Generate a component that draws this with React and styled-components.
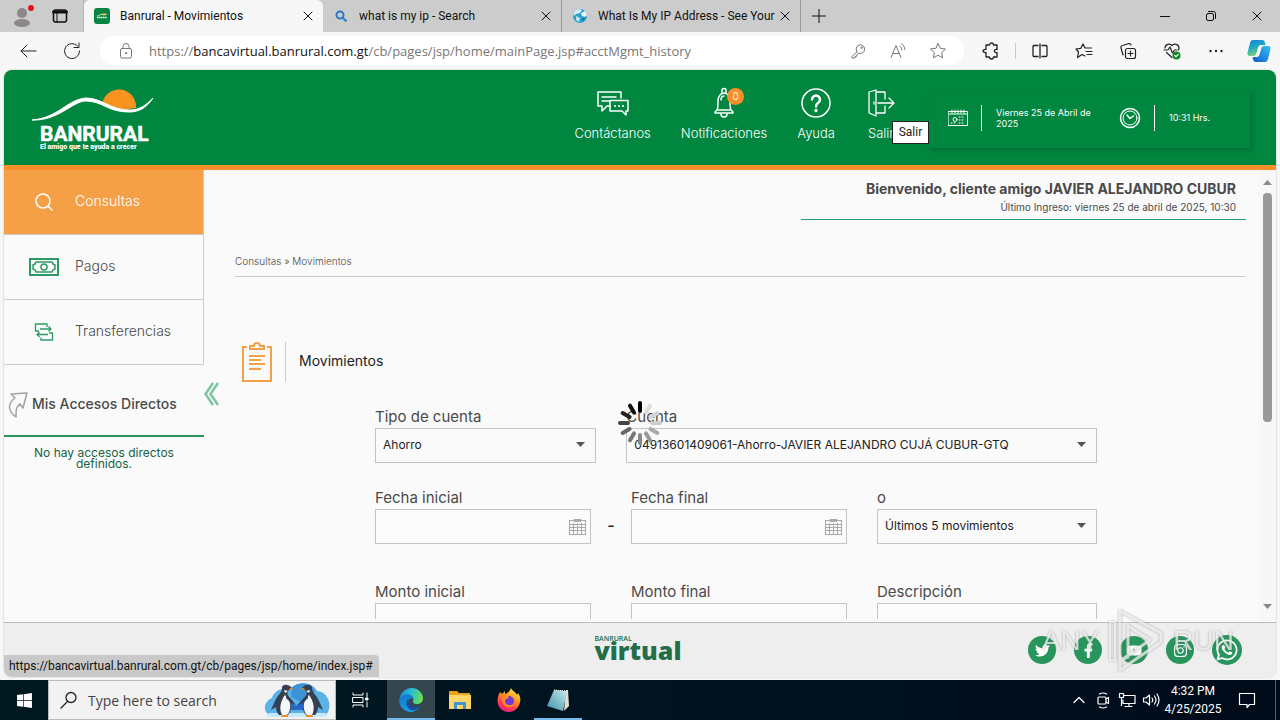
import React from 'react';
import styled, { createGlobalStyle } from 'styled-components';
import {
  FaTwitter,
  FaFacebookF,
  FaYoutube,
  FaInstagram,
  FaWhatsapp,
  FaWindows,
} from 'react-icons/fa';

const UI_FONT = '"Open Sans", "Noto Sans", sans-serif';
const UI_FONT_SMALL = 'Roboto, "Open Sans", sans-serif';
const SITE_FONT = 'Inter, "Open Sans", sans-serif';

const TABS = [
  { title: 'Banrural - Movimientos', icon: 'bank', active: true },
  { title: 'what is my ip - Search', icon: 'search' },
  { title: 'What Is My IP Address - See Your', icon: 'globe' },
];

const FAVICONS = {
  bank: (
    <svg width="16" height="16" viewBox="0 0 16 16">
      <rect width="16" height="16" rx="3" fill="#0a8541" />
      <path d="M8 7a2 2 0 0 1 4 0" fill="#f7931e" />
      <path d="M3 8c3-.3 3-2 5-1.500s3 .5 5-.5" stroke="#fff" strokeWidth=".7" fill="none" />
      <path d="M3 9.500h10" stroke="#e6f3ea" strokeWidth="1.500" strokeDasharray="1.500 .4" />
    </svg>
  ),
  search: (
    <svg width="16" height="16" viewBox="0 0 16 16" fill="none" stroke="#2c79c7" strokeWidth="2">
      <circle cx="7" cy="7" r="3.500" />
      <path d="M9.500 9.500l4 4" />
    </svg>
  ),
  globe: (
    <svg width="16" height="16" viewBox="0 0 16 16">
      <circle cx="8" cy="8" r="7" fill="#2b9fd0" />
      <path d="M3 3l4-2 3 1-2 3-4 1-2 2-.5-2z" fill="#d4f0f8" />
      <path d="M9 5l4-2 2 4-2 2-3-1z" fill="#eef9fc" />
      <path d="M4 8l4 2-1 4-3-2z" fill="#bfe6f2" />
      <path d="M10 11l3-2-2 4z" fill="#155f99" />
    </svg>
  ),
};

const Line = ({ size = 20, box = 20, width = 1, children, ...rest }) => (
  <svg
    width={size}
    height={size}
    viewBox={`0 0 ${box} ${box}`}
    fill="none"
    stroke="currentColor"
    strokeWidth={width}
    strokeLinecap="round"
    strokeLinejoin="round"
    {...rest}
  >
    {children}
  </svg>
);

const CloseIcon = () => (
  <Line size={10} box={10}>
    <path d="M1 1l8 8M9 1l-8 8" />
  </Line>
);

const PlusIcon = () => (
  <Line size={14} box={14}>
    <path d="M7 0v14M0 7h14" />
  </Line>
);

const BrowserTabs = () => (
  <TabStrip>
    <ProfileArea>
      <ChromeButton aria-label="Profile">
        <svg width="24" height="24" viewBox="0 0 24 24">
          <circle cx="12" cy="9" r="5" fill="#8b8887" />
          <ellipse cx="12" cy="19" rx="8" ry="4" fill="#8b8887" />
          <circle cx="21" cy="4" r="3" fill="#e3131b" />
        </svg>
      </ChromeButton>
      <ChromeButton aria-label="Tab actions">
        <Line size={16} box={16}>
          <rect x="1.500" y="2" width="13" height="12" rx="2" strokeWidth="1.500" />
          <path d="M1.500 4h13" strokeWidth="3" />
          <path d="M5 4v10" />
        </Line>
      </ChromeButton>
    </ProfileArea>
    {TABS.map((tab) => (
      <Tab key={tab.title} $active={tab.active}>
        {FAVICONS[tab.icon]}
        <TabTitle>{tab.title}</TabTitle>
        <TabClose aria-label="Close tab">
          <CloseIcon />
        </TabClose>
      </Tab>
    ))}
    <NewTab aria-label="New tab">
      <PlusIcon />
    </NewTab>
    <WindowButtons>
      <WindowButton aria-label="Minimize">
        <Line size={10} box={10}>
          <path d="M0 5.500h10" />
        </Line>
      </WindowButton>
      <WindowButton aria-label="Restore">
        <Line size={12} box={12}>
          <rect x="1.500" y="3.500" width="7" height="7" rx="1.500" />
          <path d="M3.500 1.500h5a2 2 0 0 1 2 2v5" />
        </Line>
      </WindowButton>
      <WindowButton aria-label="Close">
        <CloseIcon />
      </WindowButton>
    </WindowButtons>
  </TabStrip>
);

const AddressBar = () => (
  <Toolbar>
    <ToolButton aria-label="Back">
      <Line>
        <path d="M18 10H3M9 4l-6 6 6 6" />
      </Line>
    </ToolButton>
    <ToolButton aria-label="Refresh">
      <Line>
        <path d="M17.500 10a7.500 7.500 0 1 1-2-5M17 2v4.500h-5" />
      </Line>
    </ToolButton>
    <AddressPill>
      <Line size={18} box={18}>
        <rect x="3.500" y="6.500" width="11" height="9.500" rx="1.500" />
        <path d="M6 6V4.500a3 3 0 0 1 6 0V6" />
        <circle cx="9" cy="11" r=".6" fill="currentColor" />
      </Line>
      <Url>
        https://<b>bancavirtual.banrural.com.gt</b>
        /cb/pages/jsp/home/mainPage.jsp#acctMgmt_history
      </Url>
      <PillButton aria-label="Passwords">
        <Line size={18} box={18}>
          <path d="M8 9.800L3 14.500V16h3v-1.500h1.500V13L10 11.200a4.300 4.300 0 1 0-2-1.400z" />
          <circle cx="12.800" cy="5.700" r=".8" />
        </Line>
      </PillButton>
      <PillButton aria-label="Read aloud">
        <Line size={18} box={18}>
          <path d="M2 15.500L7 3.500l5 12M4 11.500h6M11 4a5 5 0 0 1 2 4M12.500 1.500a9 9 0 0 1 3.500 6" />
        </Line>
      </PillButton>
      <PillButton aria-label="Add to favorites">
        <Line size={18} box={18}>
          <path d="M9 1.500l2.300 4.800 5.200.7-3.800 3.600.9 5.200L9 13.300l-4.600 2.500.9-5.200L1.500 7l5.200-.7z" />
        </Line>
      </PillButton>
    </AddressPill>
    <ToolButton aria-label="Extensions">
      <Line size={18} box={18} width={1.300}>
        <path d="M7.500 3a2 2 0 0 1 4 0H15v4.500c-3.500-1-3.500 4 0 3V15h-3.500a2 2 0 0 1-4 0H4v-4.500c-4 .5-4-3.500 0-3V3z" />
      </Line>
    </ToolButton>
    <ToolDivider />
    <ToolButton aria-label="Split screen">
      <Line size={18} box={18} width={1.300}>
        <path d="M7 3.500H3a1 1 0 0 0-1 1v9a1 1 0 0 0 1 1h4M11 3.500h4a1 1 0 0 1 1 1v9a1 1 0 0 1-1 1h-4M9 2v14" />
      </Line>
    </ToolButton>
    <ToolButton aria-label="Favorites">
      <Line size={18} box={18} width={1.200}>
        <path d="M10 14l-3-1.500-4.500 3 1-5.500L1 7l4.800-.7L8 2l2 4h6.500M11 9.500h6M12 12.500h5" />
      </Line>
    </ToolButton>
    <ToolButton aria-label="Collections">
      <Line size={18} box={18} width={1.200}>
        <rect x="6.500" y="6.500" width="10" height="10" rx="2" />
        <path d="M11.500 9v5M9 11.500h5M4 13l-2-7a2 2 0 0 1 1.500-2.500L10 1.500a2 2 0 0 1 2 1.500" />
      </Line>
    </ToolButton>
    <ToolButton aria-label="Browser essentials">
      <Line size={18} box={18} width={1.200}>
        <path d="M2 6a4 4 0 0 1 7-2.500A4 4 0 0 1 16 6c0 .7-.2 1.300-.5 2M3.500 10.500L9 15.500M1 8h4l2-3 2.500 6 2-3H14" />
        <circle cx="13.500" cy="13.500" r="4" fill="#0b8a1d" stroke="none" />
        <path d="M11.800 13.500l1.200 1.300 2.200-2.500" stroke="#fff" />
      </Line>
    </ToolButton>
    <ToolButton aria-label="Settings and more">
      <Line size={18} box={18}>
        <circle cx="3.500" cy="9" r="1.200" fill="currentColor" stroke="none" />
        <circle cx="9" cy="9" r="1.200" fill="currentColor" stroke="none" />
        <circle cx="14.500" cy="9" r="1.200" fill="currentColor" stroke="none" />
      </Line>
    </ToolButton>
    <ToolButton aria-label="Copilot">
      <svg width="24" height="24" viewBox="0 0 24 24">
        <defs>
          <linearGradient id="cpl" x1="0" y1="0" x2=".3" y2="1">
            <stop offset="0" stopColor="#1c7fe0" />
            <stop offset=".5" stopColor="#18a9c4" />
            <stop offset="1" stopColor="#7fcf72" />
          </linearGradient>
          <linearGradient id="cpr" x1="1" y1="0" x2="0" y2="1">
            <stop offset="0" stopColor="#35c3f2" />
            <stop offset="1" stopColor="#1059cf" />
          </linearGradient>
        </defs>
        <path d="M6 1h9c2 0 2.500 1 3 3l.5 2h-4c-2 0-3 1-3.500 3l-1.500 5c-.5 2-1.500 3-3.500 3H3c-2.500 0-3-2-2.300-4L3 4c.5-2 1.300-3 3-3z" fill="url(#cpl)" />
        <path d="M18 23H9c-2 0-2.500-1-3-3l-.5-2h3.500c2 0 3-1 3.500-3L14 10c.5-2 1.500-3 3.500-3H21c2.500 0 3 2 2.300 4L21 20c-.5 2-1.300 3-3 3z" fill="url(#cpr)" />
        <path d="M11 9c.5-1.800 1.500-2.800 3.500-3h2c-1.500 1-2 2-2.500 4l-1.500 5c-.5 2-1.500 3-3 3H7c1.500-.5 2-1.500 2.500-3z" fill="#f7f7f7" />
      </svg>
    </ToolButton>
  </Toolbar>
);

const BankLogo = () => (
  <svg width="124" height="64" viewBox="0 0 124 64" role="img" aria-label="Banrural">
    <path d="M70 18a17 17 0 0 1 34 3q-17 3-34-3z" fill="#f7931e" />
    <path
      d="M0 33C26 31 36 12 54 11c16 0 24 12 44 12 10 0 16-5 23-12-6 9-13 14-24 14-22 0-26-11-44-11C40 15 26 34 0 33z"
      fill="#fff"
      stroke="#fff"
    />
    <LogoName x="8" y="54">
      BANRURAL
    </LogoName>
    <LogoSlogan x="8" y="62">
      El amigo que te ayuda a crecer
    </LogoSlogan>
  </svg>
);

const Header = () => (
  <HeaderBar>
    <BankLogo />
    <HeaderNav>
      <HeaderLink href="#contactanos">
        <Line size={32} box={32} width={1.500}>
          <path d="M24 11V5H1v14h4v5l5-5h3" />
          <path d="M5 10h14M5 14h8" />
          <path d="M13 13.500h18V24h-2v4l-4-4H13z" />
          <path d="M18 19h.1M22 19h.1M26 19h.1" strokeWidth="2" />
        </Line>
        Contáctanos
      </HeaderLink>
      <HeaderLink href="#notificaciones">
        <IconHolder>
          <Line size={32} box={32} width={1.500}>
            <path d="M14 6V3.500a2 2 0 0 1 4 0V6M9 23c1-2 1-5 1-9 0-5 3-8 6-8s6 3 6 8c0 4 0 7 1 9M7 25l2-2h14l2 2v1H7z" />
            <path d="M13 27a3 3 0 0 0 6 0M13 13c0-2 1-4 3-4" />
          </Line>
          <Badge>0</Badge>
        </IconHolder>
        Notificaciones
      </HeaderLink>
      <HeaderLink href="#ayuda">
        <Line size={32} box={32} width={1.500}>
          <circle cx="16" cy="16" r="14" />
          <path d="M12 12.500a4 4 0 1 1 6 3.500c-1.500 1-2 1.500-2 3.500" strokeWidth="2.500" />
          <circle cx="16" cy="23.500" r=".9" fill="currentColor" />
        </Line>
        Ayuda
      </HeaderLink>
      <HeaderLink href="#salir">
        <Line size={32} box={32} width={1.300}>
          <path d="M11 5h9v7M11 26h9v-7M4 5l7-2v26l-7-3zM13 16h15M24 11l5 5-5 5M9 15v2" />
        </Line>
        Salir
        <Tooltip role="tooltip">Salir</Tooltip>
      </HeaderLink>
    </HeaderNav>
    <DatePanel>
      <Line size={20} box={20}>
        <rect x=".5" y="3.500" width="19" height="14" />
        <path d="M1 6h18M4 2v3M7 2v3M10 2v3M13 2v3M16 2v3" />
        <circle cx="7" cy="11.500" r="2" />
        <path d="M11 9h6M11 12h6M11 15h6M3 15h6" strokeDasharray="1 2" />
      </Line>
      <DateText $wide>Viernes 25 de Abril de 2025</DateText>
      <Line size={22} box={22}>
        <circle cx="11" cy="11" r="9.500" strokeWidth="1.500" />
        <circle cx="11" cy="11" r="7" />
        <path d="M8 8l3 3.500L14.500 9" strokeWidth="1.500" />
      </Line>
      <DateText>10:31 Hrs.</DateText>
    </DatePanel>
  </HeaderBar>
);

const Sidebar = () => (
  <SidebarColumn>
    <MenuItem href="#consultas" $active>
      <MenuIcon>
        <Line size={20} box={20} width={1.500}>
          <circle cx="9" cy="9" r="7" />
          <path d="M14 14l4 4" />
        </Line>
      </MenuIcon>
      <MenuText>Consultas</MenuText>
    </MenuItem>
    <MenuItem href="#pagos">
      <MenuIcon>
        <svg width="30" height="18" viewBox="0 0 30 18" fill="none" stroke="#2c9a64">
          <rect x="1" y="1" width="28" height="16" strokeWidth="2" />
          <path d="M7 4h16q1 3 3 3v4q-2 0-3 3H7q-1-3-3-3V7q2 0 3-3z" strokeWidth="1.500" />
          <circle cx="15" cy="9" r="3" strokeWidth="1.500" />
        </svg>
      </MenuIcon>
      <MenuText>Pagos</MenuText>
    </MenuItem>
    <MenuItem href="#transferencias">
      <MenuIcon>
        <svg width="20" height="20" viewBox="0 0 20 20" fill="none" stroke="#2c9a64" strokeWidth="1.300">
          <path d="M13 5V2H1.500v7H5M6 7h11M14.500 4.500L17 7l-2.500 2.500M14 12.500H3M5.500 10L3 12.500 5.500 15M7 15.500V18h11.500v-7H15" />
        </svg>
      </MenuIcon>
      <MenuText>Transferencias</MenuText>
    </MenuItem>
    <ShortcutsTitle>
      <svg width="22" height="30" viewBox="0 0 22 30" fill="none" stroke="#a3a3a3" strokeWidth="1.500">
        <path d="M4 6l16-1-4 15-3-4c-4 2-4 6-4 13C1 23 0 16 8 10z" strokeLinejoin="round" />
      </svg>
      Mis Accesos Directos
    </ShortcutsTitle>
    <ShortcutsEmpty>No hay accesos directos definidos.</ShortcutsEmpty>
    <CollapseButton aria-label="Ocultar menú">
      <svg width="15" height="24" viewBox="0 0 15 24" fill="none" stroke="#7cc4a0" strokeWidth="2.500">
        <path d="M9 1L1.500 12 9 23M14 1L6.500 12l7.500 11" />
      </svg>
    </CollapseButton>
  </SidebarColumn>
);

const SelectField = ({ id, label, option, column }) => (
  <Field $column={column}>
    <Label htmlFor={id}>{label}</Label>
    <SelectBox>
      <Select id={id}>
        <option>{option}</option>
      </Select>
      <svg width="9" height="5" viewBox="0 0 9 5">
        <path d="M0 0h9L4.500 5z" fill="#555" />
      </svg>
    </SelectBox>
  </Field>
);

const TextField = ({ id, label, column, calendar }) => (
  <Field $column={column}>
    <Label htmlFor={id}>{label}</Label>
    <InputBox>
      <Input id={id} type="text" />
      {calendar && (
        <CalendarButton type="button" aria-label={`Elegir ${label}`}>
          <svg width="17" height="17" viewBox="0 0 17 17" fill="none" stroke="#a9a9a9">
            <rect x=".5" y="2.500" width="16" height="14" />
            <path d="M.5 6.500h16M.5 9.500h16M.5 12.500h16M4.500 5v11M8.500 5v11M12.500 5v11M5 1.500h7v2H5z" />
          </svg>
        </CalendarButton>
      )}
    </InputBox>
  </Field>
);

const Movements = () => (
  <Content>
    <Welcome>
      <WelcomeName>Bienvenido, cliente amigo JAVIER ALEJANDRO CUBUR</WelcomeName>
      <LastLogin>Último Ingreso: viernes 25 de abril de 2025, 10:30</LastLogin>
    </Welcome>
    <Breadcrumb>Consultas » Movimientos</Breadcrumb>
    <SectionTitle>
      <svg width="30" height="40" viewBox="0 0 30 40" fill="none" stroke="#f2a04a" strokeWidth="2">
        <path d="M5 5H1v34h28V5h-4M8 7V4h4c0-4 6-4 6 0h4v3z" />
        <path d="M7 14h16M7 18h12M7 22h16M7 27h12" />
      </svg>
      <h1>Movimientos</h1>
    </SectionTitle>
    <Form>
      <AccountRow>
        <SelectField id="tipo" label="Tipo de cuenta" option="Ahorro" />
        <SelectField
          id="cuenta"
          label="Cuenta"
          option="04913601409061-Ahorro-JAVIER ALEJANDRO CUJÁ CUBUR-GTQ"
        />
      </AccountRow>
      <FilterRow>
        <TextField id="fecha-inicial" label="Fecha inicial" column="1" calendar />
        <Dash>-</Dash>
        <TextField id="fecha-final" label="Fecha final" column="3" calendar />
        <SelectField id="rango" label="o" option="Últimos 5 movimientos" column="5" />
      </FilterRow>
      <FilterRow>
        <TextField id="monto-inicial" label="Monto inicial" column="1" />
        <TextField id="monto-final" label="Monto final" column="3" />
        <TextField id="descripcion" label="Descripción" column="5" />
      </FilterRow>
    </Form>
  </Content>
);

const SPOKES = [
  '#000', '#ddd', '#d6d6d6', '#ccc', '#aaa', '#999',
  '#888', '#777', '#666', '#444', '#222', '#111',
];

const Spinner = () => (
  <SpinnerOverlay>
    <svg width="46" height="46" viewBox="-23 -23 46 46">
      {SPOKES.map((color, i) => (
        <path
          key={i}
          d="M0-12V-20"
          stroke={color}
          strokeWidth="4"
          strokeLinecap="round"
          transform={`rotate(${i * 30})`}
        />
      ))}
    </svg>
  </SpinnerOverlay>
);

const SOCIAL = [
  { name: 'Twitter', Icon: FaTwitter },
  { name: 'Facebook', Icon: FaFacebookF },
  { name: 'YouTube', Icon: FaYoutube },
  { name: 'Instagram', Icon: FaInstagram },
  { name: 'WhatsApp', Icon: FaWhatsapp, large: true },
];

const Footer = () => (
  <FooterBar>
    <VirtualLogo>
      <small>BANRURAL</small>
      <strong>virtual</strong>
    </VirtualLogo>
    <SocialList>
      {SOCIAL.map(({ name, Icon, large }) => (
        <SocialLink key={name} href={`#${name}`} aria-label={name} $large={large}>
          <Icon />
        </SocialLink>
      ))}
    </SocialList>
    <StatusBubble>https://bancavirtual.banrural.com.gt/cb/pages/jsp/home/index.jsp#</StatusBubble>
  </FooterBar>
);

const Penguins = () => (
  <svg width="66" height="37" viewBox="0 0 66 37">
    <path d="M8 34C-2 31-1 20 8 16c2-8 12-11 19-8 4-9 21-9 26 1 13 1 16 18 8 25z" fill="#5bb2e6" />
    <path d="M28 5c8-6 19-4 23 4l-12 12-12-6z" fill="#3c94d6" />
    <path d="M6 35h54c5 0 4-4 0-4H6c-4 0-4 4 0 4z" fill="#c5e9fa" />
    <path d="M25 17l7 7 8-8v12H25z" fill="#2468c8" />
    <path d="M28 6c-4-5-11-4-10 1 0 3-5 7-7 12L7 28l5-3c0 3 1 6 3 8h9c3-3 4-8 2-13-1-3-4-6-2-11z" fill="#34404f" />
    <path d="M18 33c-3-6-2-13 3-20 4 3 6 9 5 14-1 4-2 6-4 6z" fill="#f4f7fa" />
    <path d="M22 11l10 12-5-2-5-5z" fill="#34404f" />
    <path d="M38 6c4-5 11-4 10 1 0 3 5 7 7 12l4 9-5-3c0 3-1 6-3 8h-9c-3-3-4-8-2-13 1-3 4-6 2-11z" fill="#34404f" />
    <path d="M48 33c3-6 2-13-3-20-4 3-6 9-5 14 1 4 2 6 4 6z" fill="#f4f7fa" />
    <path d="M44 11L34 23l5-2 5-5z" fill="#34404f" />
    <path d="M26 6l4 1-5 1zM40 6l-4 1 5 1zM18 33h6v2h-7zM42 33h6l1 2h-7z" fill="#f08a24" />
    <path d="M20 8l4 1-3 2zM46 8l-4 1 3 2z" fill="#fff" />
  </svg>
);

const EdgeIcon = () => (
  <svg width="24" height="24" viewBox="0 0 24 24">
    <defs>
      <linearGradient id="edge-top" x1="0" x2="1" y1=".3" y2=".5">
        <stop offset="0" stopColor="#1a8ad4" />
        <stop offset=".5" stopColor="#2dbfd0" />
        <stop offset="1" stopColor="#6be04c" />
      </linearGradient>
      <linearGradient id="edge-low" x1="0" x2="0" y1="0" y2="1">
        <stop offset="0" stopColor="#1478cf" />
        <stop offset="1" stopColor="#1a9be4" />
      </linearGradient>
    </defs>
    <path d="M.5 11C1.500 4 7 0 12.500 0 19 0 24 5 24 10c0 4-3 6-6 6-3.500 0-4.500-1.500-4-3 1.500-3-1-6-5-6C5 7 2 8.500.5 11z" fill="url(#edge-top)" />
    <path d="M.3 12C1 8 5 6.500 8.500 6.500c3 0 5.500 2 5.500 4.500C10 9 8.500 13 9.500 16c1.500 4 6.500 5.500 11 3C18 22.500 14.500 24 12 24 5 24-.2 18.500.3 12z" fill="url(#edge-low)" />
    <path d="M9 11c-3 3-2 9 3 11 4 1 7-1 9-4-5 2-10 1-11.500-3-.5-1.500-.5-3-.5-4z" fill="#124f9f" />
  </svg>
);

const ExplorerIcon = () => (
  <svg width="22" height="20" viewBox="0 0 22 20">
    <path d="M0 1h8l2 2h11v5H0z" fill="#e8a317" />
    <path d="M0 5h22v14H0z" fill="#ffd667" />
    <path d="M5 19v-7h12v7h-3v-4H8v4z" fill="#3d95d5" />
  </svg>
);

const FirefoxIcon = () => (
  <svg width="24" height="24" viewBox="0 0 24 24">
    <defs>
      <linearGradient id="fox" x1=".8" x2=".3" y1="0" y2="1">
        <stop offset="0" stopColor="#fff14a" />
        <stop offset=".4" stopColor="#ff9a1f" />
        <stop offset=".75" stopColor="#ff3b4e" />
        <stop offset="1" stopColor="#e7188a" />
      </linearGradient>
    </defs>
    <path d="M14 0c1 3 5 4 6 7l1-2c2 3 3 6 2 9-1 6-6 10-11 10C5 24 .5 19 .5 13c0-4 1-6 2.500-9l2 2 3-3v3c3-1 5-3 6-6z" fill="url(#fox)" />
    <circle cx="12" cy="13" r="5" fill="#7139d8" />
    <path d="M6 8c2-1 5 0 6 1 0 2-4 1-4 4 0 4 6 6 9 2-1 5-8 6-11 1-1-3-1-6 0-8z" fill="#ff8b22" />
  </svg>
);

const NotesIcon = () => (
  <svg width="24" height="24" viewBox="0 0 24 24">
    <defs>
      <linearGradient id="note" x1="0" x2="1" y1="1" y2="0">
        <stop offset="0" stopColor="#3f93a8" />
        <stop offset="1" stopColor="#c4e8ec" />
      </linearGradient>
    </defs>
    <path d="M20 2h2l1 16-5 5z" fill="#e6ddce" />
    <path d="M8 2l13 1-4 20-16-5z" fill="url(#note)" />
    <path d="M8 2l13 1" stroke="#fff" strokeDasharray="1 1" />
  </svg>
);

const Taskbar = () => (
  <TaskbarRow>
    <TaskButton aria-label="Start">
      <FaWindows size={17} />
    </TaskButton>
    <SearchBox>
      <Line size={18} box={18} width={1.300}>
        <circle cx="11" cy="6.500" r="5" />
        <path d="M7.500 10.500L1 17" />
      </Line>
      <SearchInput type="search" aria-label="Search" placeholder="Type here to search" />
      <Penguins />
    </SearchBox>
    <TaskButton aria-label="Task view">
      <Line size={18} box={18}>
        <path d="M2 2v2h10V2M2 16v-2h10v2M2 6.500h10v5H2zM16 2v4M16 11v5" />
        <rect x="15" y="7" width="2" height="2" fill="currentColor" />
      </Line>
    </TaskButton>
    <TaskApps>
      <TaskButton aria-label="Edge" $active $open>
        <EdgeIcon />
      </TaskButton>
      <TaskButton aria-label="File Explorer">
        <ExplorerIcon />
      </TaskButton>
      <TaskButton aria-label="Firefox">
        <FirefoxIcon />
      </TaskButton>
      <TaskButton aria-label="Notepad" $open>
        <NotesIcon />
      </TaskButton>
    </TaskApps>
    <Tray>
      <TrayButton aria-label="Show hidden icons">
        <Line size={18} box={18} width={1.300}>
          <path d="M4 11.500l5-5 5 5" />
        </Line>
      </TrayButton>
      <TrayButton aria-label="Meet now">
        <Line size={18} box={18} width={1.200}>
          <rect x="4" y="6" width="8" height="7" rx="1" />
          <path d="M12 8l2.500-1.500v6L12 11M5.500 3q3.500-2 7 0M5.500 16q3.500 2 7 0" />
        </Line>
      </TrayButton>
      <TrayButton aria-label="Network">
        <Line size={18} box={18} width={1.200}>
          <path d="M6 4.500h11v8H5V9M11 12.500v3M7 15.500h7M1.500 2.500h4v4h-4zM3.500 6.500v8" />
        </Line>
      </TrayButton>
      <TrayButton aria-label="Volume">
        <Line size={18} box={18} width={1.200}>
          <path d="M1.500 7v4h2.500l3.500 3V4L4 7zM10 7q1.500 2 0 4M12.500 5q3 4 0 8M15 3q4 6 0 12" />
        </Line>
      </TrayButton>
      <Clock>
        <span>4:32 PM</span>
        <span>4/25/2025</span>
      </Clock>
      <TaskButton aria-label="Notifications">
        <Line size={18} box={18} width={1.200}>
          <path d="M1.500 2.500h15v11h-5l-2.500 3v-3H1.500z" />
        </Line>
      </TaskButton>
    </Tray>
  </TaskbarRow>
);

const Watermark = () => (
  <WatermarkBox aria-hidden="true">
    ANY
    <svg width="56" height="64" viewBox="0 0 56 64" fill="none" stroke="currentColor" strokeWidth="3" strokeLinejoin="round">
      <path d="M12 2l41 22v9L12 61v-9l30-21L20 17v31l-8 4z" />
      <path d="M2 13h5v38H2z" strokeWidth="2" />
    </svg>
    RUN
  </WatermarkBox>
);

export default () => (
  <Screen>
    <GlobalStyle />
    <BrowserTabs />
    <AddressBar />
    <PageFrame>
      <Header />
      <Body>
        <Sidebar />
        <Movements />
        <ScrollTrack>
          <svg width="9" height="5" viewBox="0 0 9 5">
            <path d="M0 5h9L4.500 0z" fill="#8a8a8a" />
          </svg>
          <ScrollThumb />
          <svg width="9" height="5" viewBox="0 0 9 5">
            <path d="M0 0h9L4.500 5z" fill="#8a8a8a" />
          </svg>
        </ScrollTrack>
      </Body>
      <Footer />
    </PageFrame>
    <Taskbar />
    <Spinner />
    <Watermark />
  </Screen>
);

const GlobalStyle = createGlobalStyle`
  * {
    box-sizing: border-box;
  }
  body {
    margin: 0;
    font-family: ${UI_FONT};
    background: #f7f7f7;
  }
  button {
    padding: 0;
    border: 0;
    background: none;
    color: inherit;
    font: inherit;
  }
  a {
    color: inherit;
    text-decoration: none;
  }
  svg {
    display: block;
    flex-shrink: 0;
  }
`;

const Screen = styled.div`
  position: relative;
  display: flex;
  flex-direction: column;
  height: 100vh;
  overflow: hidden;
`;

const TabStrip = styled.div`
  display: flex;
  height: 32px;
  background: #cccccc;
  color: #111;
  font-family: ${UI_FONT_SMALL};
  font-size: 12px;
`;

const ProfileArea = styled.div`
  display: flex;
  align-items: center;
  gap: 14px;
  width: 84px;
  padding-left: 10px;
  border-right: 1px solid #b4b4b4;
`;

const ChromeButton = styled.button`
  display: flex;
  align-items: center;
  justify-content: center;
  width: 24px;
`;

const Tab = styled.div`
  display: flex;
  align-items: center;
  width: 239px;
  padding: 0 10px;
  background: ${(props) => (props.$active ? '#f7f7f7' : 'transparent')};
  border-radius: ${(props) => (props.$active ? '6px 6px 0 0' : '0')};
  border-right: ${(props) => (props.$active ? '0' : '1px solid #999')};
`;

const TabTitle = styled.span`
  flex: 1;
  margin-left: 10px;
  overflow: hidden;
  white-space: nowrap;
`;

const TabClose = styled.button`
  display: flex;
  justify-content: flex-end;
  width: 10px;
`;

const NewTab = styled.button`
  display: flex;
  align-items: center;
  justify-content: center;
  width: 36px;
`;

const WindowButtons = styled.div`
  display: flex;
  margin-left: auto;
`;

const WindowButton = styled.button`
  display: flex;
  align-items: center;
  justify-content: center;
  width: 46px;
`;

const Toolbar = styled.div`
  display: flex;
  align-items: center;
  height: 38px;
  padding-left: 6px;
  background: #f7f7f7;
  color: #222;
`;

const ToolButton = styled.button`
  display: flex;
  align-items: center;
  justify-content: center;
  width: 44px;
  height: 32px;
  &:last-child {
    width: 42px;
  }
`;

const ToolDivider = styled.span`
  width: 1px;
  height: 16px;
  margin: 0 2px;
  background: #c9c9c9;
`;

const AddressPill = styled.div`
  display: flex;
  flex: 1;
  align-items: center;
  height: 30px;
  margin: 0 5px 0 6px;
  padding: 0 6px 0 17px;
  border-radius: 15px;
  background: #fff;
  color: #777;
`;

const Url = styled.span`
  flex: 1;
  margin-left: 14px;
  font-size: 13px;
  white-space: nowrap;
  b {
    color: #111;
    font-weight: 400;
  }
`;

const PillButton = styled.button`
  display: flex;
  justify-content: center;
  width: 40px;
`;

const PageFrame = styled.div`
  display: flex;
  flex: 1;
  flex-direction: column;
  min-height: 0;
  margin: 0 4px 3px;
  border-radius: 8px;
  overflow: hidden;
  background: #fafafa;
  font-family: ${SITE_FONT};
  box-shadow: 0 0 2px #bbb;
`;

const HeaderBar = styled.header`
  display: flex;
  align-items: flex-start;
  height: 100px;
  padding: 17px 26px 0 28px;
  border-bottom: 5px solid #f7902a;
  background: #00863f;
  color: #fff;
`;

const LogoName = styled.text`
  fill: #fff;
  stroke: #fff;
  stroke-width: 0.5px;
  font: 700 21px Roboto, sans-serif;
`;

const LogoSlogan = styled.text`
  fill: #fff;
  font: 900 7px Roboto, sans-serif;
`;

const HeaderNav = styled.nav`
  display: flex;
  gap: 30px;
  margin: 0 32px 0 auto;
`;

const HeaderLink = styled.a`
  position: relative;
  display: flex;
  flex-direction: column;
  align-items: center;
  gap: 6px;
  font-size: 13px;
  font-weight: 300;
  line-height: 16px;
`;

const IconHolder = styled.span`
  position: relative;
`;

const Badge = styled.span`
  position: absolute;
  top: 1px;
  left: 19px;
  width: 17px;
  height: 17px;
  border-radius: 50%;
  background: #f7902a;
  font-size: 10px;
  line-height: 17px;
  text-align: center;
`;

const Tooltip = styled.span`
  position: absolute;
  top: 34px;
  right: -32px;
  width: 37px;
  border: 1px solid #222;
  background: #fff;
  color: #222;
  font: 12px/21px ${UI_FONT_SMALL};
  text-align: center;
`;

const DatePanel = styled.div`
  display: flex;
  align-items: center;
  gap: 13px;
  width: 321px;
  height: 57px;
  margin-top: 4px;
  padding: 0 19px 4px;
  box-shadow: 2px 2px 4px rgba(0, 50, 20, 0.3);
`;

const DateText = styled.span`
  display: flex;
  align-items: center;
  width: ${(props) => (props.$wide ? '125px' : '70px')};
  height: 26px;
  padding-left: 14px;
  border-left: 1px solid #fff;
  font-size: 9px;
  line-height: 11px;
`;

const Body = styled.div`
  display: flex;
  flex: 1;
  min-height: 0;
`;

const SidebarColumn = styled.aside`
  position: relative;
  width: 200px;
  color: #4a4a4a;
`;

const MenuItem = styled.a`
  display: flex;
  align-items: center;
  height: 65px;
  border: 1px solid #ccc;
  border-width: 0 1px 1px 0;
  background: ${(props) => (props.$active ? '#f5a046' : 'transparent')};
  color: ${(props) => (props.$active ? '#fff' : 'inherit')};
  font-size: 14px;
  font-weight: 300;
`;

const MenuIcon = styled.span`
  display: flex;
  justify-content: center;
  width: 30px;
  margin: 0 16px 0 25px;
`;

const MenuText = styled.span`
  padding-bottom: 3px;
`;

const ShortcutsTitle = styled.h2`
  display: flex;
  align-items: center;
  gap: 3px;
  height: 72px;
  margin: 0;
  padding: 6px 0 0 3px;
  border-bottom: 2px solid #2f9061;
  font-size: 14px;
  font-weight: 500;
`;

const ShortcutsEmpty = styled.p`
  margin: 10px 16px;
  color: #176343;
  font-size: 12px;
  line-height: 11px;
  text-align: center;
`;

const CollapseButton = styled.button`
  position: absolute;
  top: 212px;
  left: 100%;
`;

const Content = styled.main`
  display: flex;
  flex: 1;
  flex-direction: column;
  min-width: 0;
  margin-bottom: 3px;
  padding: 0 13px 0 31px;
  overflow: hidden;
  color: #4a4a4a;
`;

const Welcome = styled.div`
  align-self: flex-end;
  width: 445px;
  padding: 8px 10px 5px 0;
  border-bottom: 1px solid #2f9f6b;
  text-align: right;
`;

const WelcomeName = styled.div`
  font-size: 14px;
  font-weight: 700;
  line-height: 22px;
  white-space: nowrap;
`;

const LastLogin = styled.div`
  font-size: 10px;
  line-height: 14px;
`;

const Breadcrumb = styled.nav`
  margin-top: 34px;
  padding-bottom: 7px;
  border-bottom: 1px solid #ccc;
  font-size: 10px;
  font-weight: 300;
  line-height: 15px;
`;

const SectionTitle = styled.div`
  display: flex;
  flex-shrink: 0;
  gap: 13px;
  height: 40px;
  margin: 65px 0 0 7px;
  h1 {
    display: flex;
    align-items: center;
    margin: 0;
    padding: 0 0 3px 13px;
    border-left: 1px solid #ccc;
    color: #222;
    font-size: 14px;
    font-weight: 400;
  }
`;

const Form = styled.form`
  margin: 24px 149px 0 140px;
`;

const AccountRow = styled.div`
  display: grid;
  grid-template-columns: 221fr 470fr;
  gap: 30px;
  margin-bottom: 24px;
`;

const FilterRow = styled.div`
  display: grid;
  grid-template-columns: 216fr 40px 216fr 30px 220fr;
  margin-bottom: 37px;
`;

const Field = styled.div`
  min-width: 0;
  grid-column: ${(props) => props.$column || 'auto'};
`;

const Label = styled.label`
  display: block;
  font-size: 15px;
  font-weight: 400;
  line-height: 22px;
`;

const InputBox = styled.div`
  display: flex;
  align-items: center;
  height: 35px;
  padding-right: 4px;
  border: 1px solid #c4c4c4;
  background: #fbfbfb;
`;

const Input = styled.input`
  flex: 1;
  min-width: 0;
  border: 0;
  background: transparent;
  font: 12px ${SITE_FONT};
`;

const CalendarButton = styled.button`
  display: flex;
`;

const SelectBox = styled.div`
  position: relative;
  height: 35px;
  border: 1px solid #c4c4c4;
  svg {
    position: absolute;
    top: 13px;
    right: 10px;
  }
`;

const Select = styled.select`
  width: 100%;
  height: 100%;
  padding: 0 24px 2px 7px;
  border: 0;
  appearance: none;
  background: transparent;
  color: #222;
  font: 12px ${SITE_FONT};
`;

const Dash = styled.span`
  padding-top: 28px;
  color: #222;
  font-size: 16px;
  font-weight: 500;
  text-align: center;
`;

const ScrollTrack = styled.div`
  display: flex;
  flex-direction: column;
  align-items: center;
  width: 17px;
  padding: 10px 0 13px;
  background: #f7f7f7;
  svg:last-child {
    margin-top: auto;
  }
`;

const ScrollThumb = styled.div`
  width: 9px;
  height: 229px;
  margin-top: 8px;
  border-radius: 4px;
  background: #999;
`;

const FooterBar = styled.footer`
  position: relative;
  display: grid;
  grid-template-columns: 1fr auto 1fr;
  height: 55px;
  padding: 0 36px 0 32px;
  border-top: 1px solid #bbb;
  background: #eee;
`;

const VirtualLogo = styled.div`
  display: flex;
  flex-direction: column;
  grid-column: 2;
  padding-top: 13px;
  color: #226e4b;
  font-family: 'Open Sans', sans-serif;
  small {
    font-size: 7px;
    font-weight: 600;
    line-height: 6px;
  }
  strong {
    font-size: 25px;
    font-weight: 800;
    line-height: 16px;
  }
`;

const SocialList = styled.div`
  display: flex;
  align-items: center;
  justify-content: flex-end;
  gap: 18px;
  margin-right: -2px;
`;

const SocialLink = styled.a`
  display: flex;
  align-items: center;
  justify-content: center;
  width: ${(props) => (props.$large ? '30px' : '28px')};
  height: ${(props) => (props.$large ? '30px' : '28px')};
  border-radius: 50%;
  background: #27955c;
  color: #fff;
  font-size: ${(props) => (props.$large ? '24px' : '15px')};
`;

const StatusBubble = styled.div`
  position: absolute;
  bottom: 0;
  left: 0;
  padding: 0 6px 0 5px;
  border-radius: 0 4px 0 0;
  background: #c9c9c9;
  color: #111;
  font: 12px/22px ${UI_FONT_SMALL};
`;

const SpinnerOverlay = styled.div`
  position: absolute;
  top: 400px;
  left: 50%;
  margin-left: -23px;
`;

const WatermarkBox = styled.div`
  position: absolute;
  right: 46px;
  bottom: 47px;
  display: flex;
  align-items: center;
  gap: 9px;
  color: rgba(255, 255, 255, 0.7);
  font: 28px 'Liberation Sans', sans-serif;
  filter: drop-shadow(0 0 1px rgba(90, 90, 90, 0.7));
  pointer-events: none;
`;

const TaskbarRow = styled.div`
  display: flex;
  height: 40px;
  background: linear-gradient(90deg, #00191f, #001320 50%, #000b1a);
  color: #fff;
`;

const TaskButton = styled.button`
  display: flex;
  align-items: center;
  justify-content: center;
  width: 48px;
  background: ${(props) => (props.$active ? '#34474f' : 'transparent')};
  box-shadow: ${(props) => (props.$open ? 'inset 0 -2px 0 #76b9ed' : 'none')};
`;

const SearchBox = styled.div`
  display: flex;
  align-items: center;
  width: 288px;
  padding: 0 5px 0 11px;
  border: 1px solid #bbb;
  background: #f2f2f2;
  color: #222;
`;

const SearchInput = styled.input`
  flex: 1;
  min-width: 0;
  margin-left: 8px;
  border: 0;
  background: transparent;
  font: 14px ${UI_FONT};
  &::placeholder {
    color: #444;
  }
`;

const TaskApps = styled.div`
  display: flex;
  gap: 1px;
  margin-left: 3px;
`;

const Tray = styled.div`
  display: flex;
  margin-left: auto;
  padding-right: 4px;
  border-right: 1px solid #55606b;
  margin-right: 4px;
`;

const TrayButton = styled.button`
  display: flex;
  align-items: center;
  justify-content: center;
  width: 24px;
`;

const Clock = styled.div`
  display: flex;
  flex-direction: column;
  justify-content: center;
  width: 60px;
  font-family: ${UI_FONT_SMALL};
  font-size: 12px;
  line-height: 18px;
  text-align: center;
`;
